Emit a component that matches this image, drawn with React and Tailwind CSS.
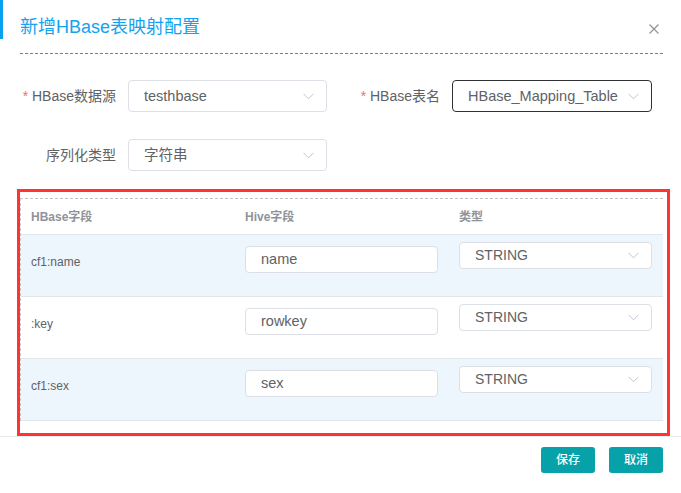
import React from "react";

const FONT = { fontFamily: "'Liberation Sans', 'Noto Sans CJK SC', sans-serif" };

function Chevron() {
  return (
    <svg width="11" height="7" viewBox="0 0 11 7" className="shrink-0">
      <polyline points="0.5,0.8 5.5,5.8 10.5,0.8" fill="none" stroke="#c0c4cc" strokeWidth="1" />
    </svg>
  );
}

function FormSelect({ value, width, dark }) {
  return (
    <div
      className={`flex items-center justify-between h-[32px] rounded-[4px] border pl-[15px] pr-[12px] ${
        dark ? "border-[#303133]" : "border-[#dcdfe6]"
      } ${width}`}
    >
      <span className="text-[14.5px] text-[#606266] leading-none whitespace-nowrap">{value}</span>
      <Chevron />
    </div>
  );
}

function Label({ text, required, width }) {
  return (
    <div className={`${width} shrink-0 pr-[12px] text-right text-[14px] text-[#606266] whitespace-nowrap`}>
      {required && <span className="text-[#f56c6c]">* </span>}
      {text}
    </div>
  );
}

const rows = [
  { hbase: "cf1:name", hive: "name", type: "STRING", alt: true },
  { hbase: ":key", hive: "rowkey", type: "STRING", alt: false },
  { hbase: "cf1:sex", hive: "sex", type: "STRING", alt: true },
];

export default function App() {
  return (
    <div className="w-[681px] h-[493px] bg-white overflow-hidden" style={FONT}>
      {/* Header */}
      <div className="flex items-start h-[39px] border-l-[3px] border-l-[#0aa0f0]">
        <div className="pl-[17px] pt-[15px] text-[18px] leading-[24px] text-[#14a2ef] whitespace-nowrap">新增HBase表映射配置</div>
        <svg width="10" height="10" viewBox="0 0 10 10" className="ml-auto mr-[22px] mt-[24px]">
          <path d="M0.5 0.5 L9.5 9.5 M9.5 0.5 L0.5 9.5" stroke="#909399" strokeWidth="1.2" fill="none" />
        </svg>
      </div>
      <div className="ml-[20px] w-[643px] mt-[14px] text-[#0ea2f2] border-t border-dashed border-t-[#0ea2f2]" />

      {/* Form */}
      <div className="mt-[26px] pl-[20px]">
        <div className="flex items-center h-[32px]">
          <Label text="HBase数据源" required width="w-[108px]" />
          <FormSelect value="testhbase" width="w-[199px]" />
          <div className="w-[17px]" />
          <Label text="HBase表名" required width="w-[108px]" />
          <FormSelect value="HBase_Mapping_Table" width="w-[200px]" dark />
        </div>
        <div className="flex items-center h-[32px] mt-[27px]">
          <Label text="序列化类型" width="w-[108px]" />
          <FormSelect value="字符串" width="w-[199px]" />
        </div>
      </div>

      {/* Mapping table (highlighted) */}
      <div className="ml-[17px] mt-[18px] w-[653px] h-[247px] border-[3px] border-[#ff3333] pt-[6px]">
        <div className="w-[643px] border-t border-l border-dashed border-t-[#c4c4c4] border-l-[#c4c4c4]">
          <div className="grid grid-cols-3 h-[35px] items-center text-[12px] font-bold text-[#909399]">
            <div className="pl-[10px]">HBase字段</div>
            <div className="pl-[10px]">Hive字段</div>
            <div className="pl-[10px]">类型</div>
          </div>
          {rows.map((r, i) => (
            <div
              key={i}
              className={`grid grid-cols-3 h-[62px] border-t border-t-[#dfe6ec] ${r.alt ? "bg-[#edf6fd]" : "bg-white"}`}
            >
              <div className="pl-[10px] pt-[19px] text-[12px] leading-[16px] text-[#606266]">{r.hbase}</div>
              <div className="pl-[10px] pt-[11px]">
                <div className="w-[193px] h-[27px] flex items-center rounded-[4px] border border-[#dcdfe6] bg-white pl-[15px] text-[14.5px] text-[#606266]">
                  {r.hive}
                </div>
              </div>
              <div className="pl-[10px] pt-[7px]">
                <div className="w-[193px] h-[27px] flex items-center justify-between rounded-[4px] border border-[#dcdfe6] bg-white pl-[15px] pr-[12px] text-[14px] text-[#606266]">
                  <span>{r.type}</span>
                  <Chevron />
                </div>
              </div>
            </div>
          ))}
          <div className="border-t border-t-[#dfe6ec]" />
        </div>
      </div>

      {/* Footer */}
      <div className="border-t border-t-[#e8eaec] flex justify-end gap-[14px] pt-[10px] pr-[18px]">
        <button className="w-[54px] h-[26px] rounded-[3px] bg-[#07a1a9] text-white text-[12px] font-medium">保存</button>
        <button className="w-[54px] h-[26px] rounded-[3px] bg-[#07a1a9] text-white text-[12px] font-medium">取消</button>
      </div>
    </div>
  );
}
